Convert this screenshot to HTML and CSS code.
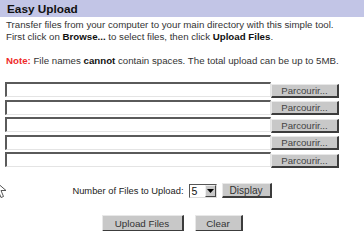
FILE: index.html
```html
<!DOCTYPE html>
<html>
<head>
<meta charset="utf-8">
<title>Easy Upload</title>
<link rel="stylesheet" href="styles.css">
</head>
<body>
<div class="page">
  <div class="titlebar">Easy Upload</div>
  <p class="intro">Transfer files from your computer to your main directory with this simple tool.<br>First click on <b>Browse...</b> to select files, then click <b>Upload Files</b>.<br><br><span class="note">Note:</span> File names <b>cannot</b> contain spaces. The total upload can be up to 5MB.</p>
  <div class="files">
    <div class="filerow"><span class="field"></span><span class="btn browse">Parcourir...</span></div>
    <div class="filerow"><span class="field"></span><span class="btn browse">Parcourir...</span></div>
    <div class="filerow"><span class="field"></span><span class="btn browse">Parcourir...</span></div>
    <div class="filerow"><span class="field"></span><span class="btn browse">Parcourir...</span></div>
    <div class="filerow"><span class="field"></span><span class="btn browse">Parcourir...</span></div>
  </div>
  <div class="countrow">
    <span class="label">Number of Files to Upload:</span>
    <span class="select"><span class="value">5</span><span class="arrow"><svg width="7" height="4" viewBox="0 0 7 4"><path d="M0 0H7L3.5 4Z" fill="#000"/></svg></span></span>
    <span class="btn display">Display</span>
  </div>
  <div class="actions">
    <span class="btn upload">Upload Files</span>
    <span class="btn clear">Clear</span>
  </div>
  <svg class="cursor" width="14" height="20" viewBox="0 0 14 20"><path d="M1 1V15L4.5 11.5L7 17.5L9.5 16.5L7 10.5H12Z" fill="#fff" stroke="#555" stroke-width="1"/></svg>
</div>
</body>
</html>
```
FILE: styles.css
```css
html, body {
  margin: 0;
  padding: 0;
  background: #fff;
}
.page {
  position: relative;
  width: 364px;
  height: 231px;
  overflow: hidden;
  font-family: "Liberation Sans", Arial, sans-serif;
  font-size: 9.7px;
  color: #222;
}
.titlebar {
  height: 17px;
  line-height: 18px;
  background: #c2c5e6;
  padding-left: 7px;
  font-size: 11.8px;
  font-weight: bold;
  color: #111;
}
.intro {
  margin: 2px 0 0 0;
  padding: 0 6px;
  line-height: 12px;
  color: #333;
  white-space: nowrap;
}
.intro b {
  color: #111;
}
.note {
  color: #ee2a2a;
  font-weight: bold;
}
.files {
  margin: 15px 0 0 5px;
  width: 334px;
  display: flex;
  flex-direction: column;
  gap: 2.5px;
}
.filerow {
  display: flex;
  align-items: center;
  height: 15px;
}
.field {
  box-sizing: border-box;
  width: 266px;
  height: 15px;
  border-top: 2px solid #5a5a5a;
  border-left: 2px solid #5a5a5a;
  border-bottom: 1px solid #e4e4e4;
  border-right: 1px solid #e4e4e4;
  background: #fff;
}
.btn {
  box-sizing: border-box;
  display: inline-flex;
  align-items: center;
  justify-content: center;
  background: #c8c8c8;
  border-top: 1px solid #e8e8e8;
  border-left: 1px solid #e8e8e8;
  border-right: 2px solid #3c3c3c;
  border-bottom: 2px solid #3c3c3c;
  color: #333;
  font-size: 9.8px;
  white-space: nowrap;
}
.browse {
  width: 68px;
  height: 14px;
  margin-top: 2px;
  font-size: 9.6px;
  color: #444;
}
.countrow {
  display: flex;
  align-items: center;
  justify-content: center;
  width: 344px;
  margin-top: 16px;
  height: 15px;
}
.label {
  color: #222;
  font-size: 9.35px;
  white-space: nowrap;
}
.select {
  box-sizing: border-box;
  display: inline-flex;
  margin-left: 5px;
  width: 28px;
  height: 14px;
  border-top: 1px solid #555;
  border-left: 1px solid #555;
  border-bottom: 1px solid #ddd;
  border-right: 1px solid #ddd;
  background: #fff;
}
.value {
  flex: 1;
  padding-left: 2px;
  line-height: 12px;
  color: #111;
  font-size: 10.5px;
}
.arrow {
  box-sizing: border-box;
  width: 11px;
  display: flex;
  align-items: center;
  justify-content: center;
  background: #c8c8c8;
  border-right: 1px solid #444;
  border-bottom: 1px solid #444;
  border-top: 1px solid #eee;
  border-left: 1px solid #eee;
}
.display {
  width: 50px;
  height: 15px;
  margin-left: 5px;
  font-size: 10.1px;
}
.actions {
  display: flex;
  justify-content: center;
  gap: 11px;
  width: 344px;
  margin-top: 17px;
}
.upload {
  width: 82px;
  height: 17px;
}
.clear {
  width: 48px;
  height: 17px;
}
.cursor {
  position: absolute;
  left: -6px;
  top: 180px;
}
```
